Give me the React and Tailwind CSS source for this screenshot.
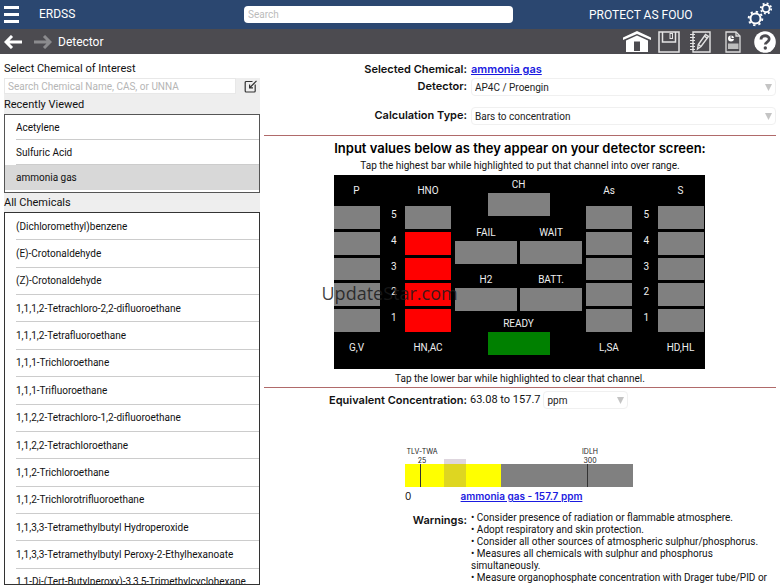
import React, { useState } from "react";

const recent = ["Acetylene", "Sulfuric Acid", "ammonia gas"];

const chemicals = [
  "(Dichloromethyl)benzene",
  "(E)-Crotonaldehyde",
  "(Z)-Crotonaldehyde",
  "1,1,1,2-Tetrachloro-2,2-difluoroethane",
  "1,1,1,2-Tetrafluoroethane",
  "1,1,1-Trichloroethane",
  "1,1,1-Trifluoroethane",
  "1,1,2,2-Tetrachloro-1,2-difluoroethane",
  "1,1,2,2-Tetrachloroethane",
  "1,1,2-Trichloroethane",
  "1,1,2-Trichlorotrifluoroethane",
  "1,1,3,3-Tetramethylbutyl Hydroperoxide",
  "1,1,3,3-Tetramethylbutyl Peroxy-2-Ethylhexanoate",
  "1,1-Di-(Tert-Butylperoxy)-3,3,5-Trimethylcyclohexane",
];

const warnings = [
  "Consider presence of radiation or flammable atmosphere.",
  "Adopt respiratory and skin protection.",
  "Consider all other sources of atmospheric sulphur/phosphorus.",
  "Measures all chemicals with sulphur and phosphorus simultaneously.",
  "Measure organophosphate concentration with Drager tube/PID or",
];

const levels = [5, 4, 3, 2, 1];

function MenuIcon() {
  return (
    <svg width="15" height="17" viewBox="0 0 15 17" fill="#fff" aria-hidden="true">
      <rect width="15" height="3" />
      <rect y="7" width="15" height="3" />
      <rect y="14" width="15" height="3" />
    </svg>
  );
}

function ArrowIcon({ flip, color }) {
  return (
    <svg width="18" height="14" viewBox="0 0 18 14" fill="none" stroke={color} strokeWidth="3" aria-hidden="true">
      <path d={flip ? "M0 7h16M10 1l6 6-6 6" : "M18 7H2M8 1L2 7l6 6"} />
    </svg>
  );
}

function GearsIcon() {
  return (
    <svg width="26" height="26" viewBox="0 0 26 26" fill="none" stroke="#fff" aria-hidden="true">
      <circle cx="8.500" cy="16.500" r="5" strokeWidth="2" />
      <circle cx="8.500" cy="16.500" r="6.800" strokeWidth="2" strokeDasharray="2.300 3.040" />
      <circle cx="19" cy="6.500" r="3.600" strokeWidth="1.800" />
      <circle cx="19" cy="6.500" r="5.200" strokeWidth="1.800" strokeDasharray="1.900 2.184" />
    </svg>
  );
}

function HomeIcon() {
  return (
    <svg width="28" height="22" viewBox="0 0 28 22" aria-hidden="true">
      <path d="M0 6.500L14 0l14 6.500V9L14 3 0 9z" fill="#fff" />
      <path d="M3 9.500L14 4.500l11 5V21H3z" fill="#fff" />
      <path d="M11 20V10.500h6V20z" fill="#4c4b50" />
    </svg>
  );
}

function SaveIcon() {
  return (
    <svg width="22" height="22" viewBox="0 0 22 22" fill="none" stroke="#e4e4e4" strokeWidth="1.500" aria-hidden="true">
      <path d="M1 1h20v20H1z" />
      <path d="M4.500 1v10h13V1" />
      <rect x="12" y="2.500" width="2.500" height="5" strokeWidth="1" />
    </svg>
  );
}

function NotebookIcon() {
  return (
    <svg width="22" height="22" viewBox="0 0 22 22" fill="none" stroke="#e4e4e4" strokeWidth="1.400" aria-hidden="true">
      <path d="M3 1h17v20H3z" />
      <path d="M0 3.500h5M0 6.500h5M0 9.500h5M0 12.500h5M0 15.500h5M0 18.500h5" strokeWidth="1" />
      <path d="M7.500 18l.8-4.500L15.500 3.500l3 2L11 15.500z" fill="#4c4b50" />
      <path d="M8.300 13.500l2.700 2M14.300 5.200l3 2" />
    </svg>
  );
}

function ReportIcon() {
  return (
    <svg width="16" height="22" viewBox="0 0 16 22" fill="none" stroke="#dcdcdc" strokeWidth="1.300" aria-hidden="true">
      <path d="M1 1h10l4 4v16H1z" />
      <path d="M11 1v4h4" />
      <circle cx="6" cy="7.500" r="3" fill="#fff" stroke="none" />
      <path d="M6 4.500v3h3" stroke="#4c4b50" strokeWidth="0.900" />
      <rect x="3" y="12.500" width="10.500" height="5.500" fill="#bdbdbd" stroke="none" />
    </svg>
  );
}

function HelpIcon() {
  return (
    <svg width="22" height="22" viewBox="0 0 22 22" fill="none" aria-hidden="true">
      <circle cx="11" cy="11" r="10.800" fill="#fff" />
      <path d="M7 8.500C7 3.500 15.200 3.700 15.200 8c0 3-3.900 3-3.900 5.500" stroke="#4c4b50" strokeWidth="2.800" />
      <circle cx="11.300" cy="17" r="1.700" fill="#4c4b50" />
    </svg>
  );
}

function ImportIcon() {
  return (
    <svg width="13" height="13" viewBox="0 0 13 13" fill="none" stroke="#333" strokeWidth="1.200" aria-hidden="true">
      <path d="M8.500 1.500H2.200a1 1 0 0 0-1 1v8.500a1 1 0 0 0 1 1h8a1 1 0 0 0 1-1V4.500" />
      <path d="M12.500.8L6 7.500M5.600 4.500v3.400H9" />
    </svg>
  );
}

function Select({ id, value, options }) {
  return (
    <div className="relative w-full">
      <select
        id={id}
        defaultValue={value}
        className="block h-[18px] w-full appearance-none rounded-sm border border-[#f0f0f0] bg-white pt-px pr-4 pl-[3px] font-['Roboto',sans-serif] text-[10px] leading-4 text-[#222]"
      >
        {options.map((o) => (
          <option key={o}>{o}</option>
        ))}
      </select>
      <svg className="pointer-events-none absolute top-[6px] right-1 fill-[#c4c4c4]" width="7" height="7" viewBox="0 0 7 7" aria-hidden="true">
        <path d="M0 0h7L3.500 7z" />
      </svg>
    </div>
  );
}

function Channel({ top, bottom, value, onChange }) {
  return (
    <div className="flex w-[46px] shrink-0 flex-col text-center">
      <div className="h-[31px] pt-2 leading-4">{top}</div>
      <div className="grid h-[126px] grid-rows-5 gap-[3px]">
        {levels.map((n) => (
          <button
            key={n}
            type="button"
            aria-label={`${top} bar ${n}`}
            onClick={() => onChange(n)}
            className={n <= value ? "bg-[#ff0000]" : "bg-[#808080]"}
          />
        ))}
      </div>
      <div className="pt-2 leading-4">{bottom}</div>
    </div>
  );
}

function Scale() {
  return (
    <div className="box-content grid h-[126px] flex-1 grid-rows-5 gap-[3px] self-start pt-8 pl-[3px] text-center">
      {levels.map((n) => (
        <span key={n} className="leading-4">{n}</span>
      ))}
    </div>
  );
}

function Lamp({ name, on }) {
  return (
    <div className="w-[62px] text-center">
      <div className="leading-4">{name}</div>
      <div className={on ? "h-[23px] bg-[#008000]" : "h-[23px] bg-[#808080]"} />
    </div>
  );
}

function DetectorPanel() {
  const [bars, setBars] = useState({ P: 0, HNO: 4, As: 0, S: 0 });
  const set = (k) => (n) => setBars((b) => ({ ...b, [k]: b[k] === n ? n - 1 : n }));
  return (
    <div className="flex justify-center pr-0.5">
      <div className="relative flex h-[194px] w-[371px] bg-black pr-px font-['Roboto',sans-serif] text-[10px] text-[#eee]">
        <Channel top="P" bottom="G,V" value={bars.P} onChange={set("P")} />
        <Scale />
        <Channel top="HNO" bottom="HN,AC" value={bars.HNO} onChange={set("HNO")} />
        <div className="mx-1 flex w-[127px] shrink-0 flex-col items-center pt-[2px]">
          <Lamp name="CH" />
          <div className="mt-[9px] flex w-full justify-between">
            <Lamp name="FAIL" />
            <Lamp name="WAIT" />
          </div>
          <div className="mt-2 flex w-full justify-between">
            <Lamp name="H2" />
            <Lamp name="BATT." />
          </div>
          <div className="mt-[5px]">
            <Lamp name="READY" on />
          </div>
        </div>
        <Channel top="As" bottom="L,SA" value={bars.As} onChange={set("As")} />
        <Scale />
        <Channel top="S" bottom="HD,HL" value={bars.S} onChange={set("S")} />
        <span className="pointer-events-none absolute top-[106px] -left-3 font-['Open_Sans',sans-serif] text-[18px] leading-6 text-[#1c1c1c]/85">
          UpdateStar.com
        </span>
      </div>
    </div>
  );
}

function ConcentrationChart() {
  return (
    <svg className="block" width="229" height="41" viewBox="0 0 229 41" role="img" aria-label="Concentration range">
      <rect x="0" y="18" width="96" height="23" fill="#ffff00" />
      <rect x="96" y="18" width="132" height="23" fill="#808080" />
      <rect x="39" y="13" width="22" height="28" fill="#806080" fillOpacity="0.26" />
      <path d="M15.500 18v23M182.500 18v23" stroke="#333" />
      <g fill="#222" fontSize="7" textAnchor="middle">
        <text x="17" y="8">TLV-TWA</text>
        <text x="17" y="17">25</text>
        <text x="185" y="8">IDLH</text>
        <text x="185" y="17">300</text>
      </g>
    </svg>
  );
}

export default function App() {
  return (
    <div className="flex h-screen flex-col overflow-hidden bg-white font-['Inter','Liberation_Sans',sans-serif] text-[11px] text-[#111]">
      <header className="grid h-[29px] shrink-0 grid-cols-[1fr_269px_267px] items-center bg-[#2b4770] font-['Roboto',sans-serif] text-[12px] text-white">
        <div className="flex items-center pb-px pl-1">
          <button type="button" aria-label="Menu"><MenuIcon /></button>
          <span className="ml-5">ERDSS</span>
        </div>
        <input aria-label="Search" placeholder="Search" className="h-[17px] w-full rounded-sm bg-white px-1 text-[10px] text-[#222] placeholder:text-[#bbb]" />
        <div className="flex items-center justify-between pr-[7px]">
          <span className="pl-[76px]">PROTECT AS FOUO</span>
          <button type="button" aria-label="Settings"><GearsIcon /></button>
        </div>
      </header>

      <nav className="flex h-[25px] shrink-0 items-center bg-[#4c4b50] pr-1 pl-1 text-white">
        <button type="button" aria-label="Back"><ArrowIcon color="#fff" /></button>
        <button type="button" aria-label="Forward" className="ml-3"><ArrowIcon flip color="#8b8b8e" /></button>
        <h1 className="ml-[6px] font-['Roboto',sans-serif] text-[12px]">Detector</h1>
        <div className="ml-auto flex items-center">
          <button type="button" aria-label="Home"><HomeIcon /></button>
          <button type="button" aria-label="Save" className="ml-[7px]"><SaveIcon /></button>
          <button type="button" aria-label="Notes" className="ml-[10px]"><NotebookIcon /></button>
          <button type="button" aria-label="Report" className="ml-[13px]"><ReportIcon /></button>
          <button type="button" aria-label="Help" className="ml-[13px]"><HelpIcon /></button>
        </div>
      </nav>

      <main className="flex min-h-0 flex-1">
        <aside className="flex w-[260px] shrink-0 flex-col pt-[5px] pl-1">
          <label htmlFor="chem" className="h-[19px] font-['Roboto',sans-serif] text-[11px] leading-5">Select Chemical of Interest</label>
          <div className="flex items-center bg-[#eeeeee]">
            <input id="chem" placeholder="Search Chemical Name, CAS, or UNNA" className="h-4 min-w-0 flex-1 border border-[#e8e8e8] bg-white px-[3px] font-['Roboto',sans-serif] text-[10px] placeholder:text-[#b5b5b5]" />
            <button type="button" aria-label="Import" className="px-2 pr-[3px]"><ImportIcon /></button>
          </div>
          <h2 className="bg-[#eeeeee] pt-px font-['Roboto',sans-serif] text-[11px] leading-[19px]">Recently Viewed</h2>
          <ul className="h-[79px] shrink-0 border border-[#555] font-['Roboto',sans-serif] text-[10px] leading-[25px]">
            {recent.map((name, i) => (
              <li key={name} className={i === 2 ? "h-[25px] bg-[#d8d8d8] pl-[11px]" : "ml-[11px] h-[25px] border-b border-[#ccc]"}>
                {name}
              </li>
            ))}
          </ul>
          <h2 className="bg-[#eeeeee] font-['Roboto',sans-serif] text-[11px] leading-[19px]">All Chemicals</h2>
          <div className="min-h-0 flex-1 overflow-hidden border border-[#333]">
            <ul className="flex h-[383px] flex-col pl-[11px] font-['Roboto',sans-serif] text-[10px]">
              {chemicals.map((name) => (
                <li key={name} className="flex flex-1 items-center border-b border-[#ccc] whitespace-nowrap">{name}</li>
              ))}
            </ul>
          </div>
        </aside>

        <section className="min-w-0 flex-1 overflow-hidden px-1 pt-[6px]">
          <div className="grid grid-cols-[203px_1fr] gap-x-1">
            <span className="text-right leading-[18px] font-semibold">Selected Chemical:</span>
            <a href="#ammonia" className="leading-[18px] font-semibold text-[#1a1ae0] underline">ammonia gas</a>
            <label htmlFor="detector" className="text-right leading-4 font-semibold">Detector:</label>
            <Select id="detector" value="AP4C / Proengin" options={["AP4C / Proengin"]} />
            <label htmlFor="calc" className="mt-[11px] text-right leading-4 font-semibold">Calculation Type:</label>
            <div className="mt-[11px]">
              <Select id="calc" value="Bars to concentration" options={["Bars to concentration"]} />
            </div>
          </div>

          <div className="mt-[10px] border-t border-[#b06a6a] pt-[3px] text-center">
            <h2 className="text-[13px] leading-[18px] font-semibold text-black">Input values below as they appear on your detector screen:</h2>
            <p className="pt-px pb-px font-['Roboto',sans-serif] text-[10px] leading-4">Tap the highest bar while highlighted to put that channel into over range.</p>
          </div>
          <DetectorPanel />
          <p className="border-b border-[#b06a6a] pt-px text-center font-['Roboto',sans-serif] text-[10px] leading-[17px]">Tap the lower bar while highlighted to clear that channel.</p>

          <div className="mt-[3px] grid grid-cols-[203px_auto_85px] items-center justify-start gap-x-[3px]">
            <label htmlFor="unit" className="text-right leading-4 font-semibold">Equivalent Concentration:</label>
            <span className="font-['Roboto',sans-serif]">63.08 to 157.7</span>
            <Select id="unit" value="ppm" options={["ppm"]} />
          </div>

          <div className="mt-[37px] ml-[141px] w-[229px]">
            <ConcentrationChart />
            <div className="relative leading-[18px]">
              <span className="absolute left-0 text-[10px]">0</span>
              <a href="#ammonia" className="block pl-1 text-center text-[10px] font-semibold text-[#1a1ae0] underline">ammonia gas - 157.7 ppm</a>
            </div>
          </div>

          <div className="mt-[7px] grid grid-cols-[203px_1fr] gap-x-1">
            <h3 className="text-right leading-4 font-semibold">Warnings:</h3>
            <ul className="pr-1 font-['Roboto',sans-serif] text-[10px] leading-3">
              {warnings.map((w) => (
                <li key={w}>• {w}</li>
              ))}
            </ul>
          </div>
        </section>
      </main>
    </div>
  );
}
